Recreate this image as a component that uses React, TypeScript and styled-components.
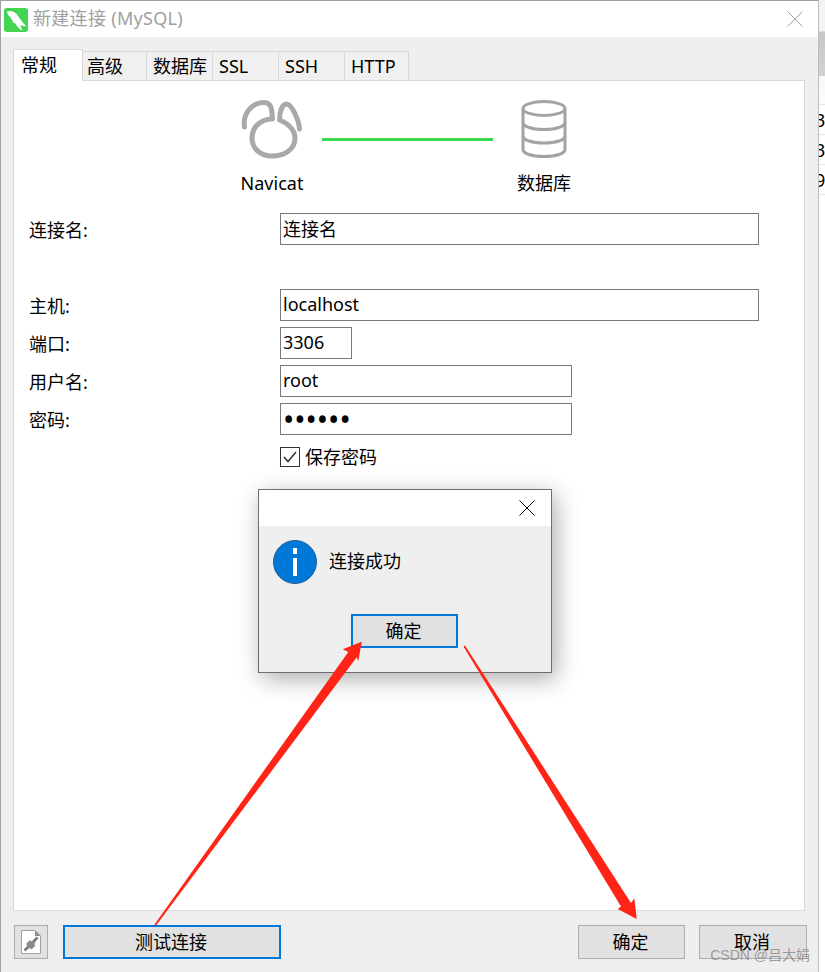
import React from 'react';
import styled, { createGlobalStyle } from 'styled-components';

const GlobalStyle = createGlobalStyle`
  html, body {
    margin: 0;
    padding: 0;
    background: #fff;
  }
  * {
    box-sizing: border-box;
  }
`;

const Page = styled.div`
  position: relative;
  width: 825px;
  height: 972px;
  display: flex;
  overflow: hidden;
  font-family: 'Noto Sans', 'Noto Sans CJK SC', sans-serif;
  font-size: 18px;
  color: #000;
`;

const Win = styled.div`
  width: 819px;
  height: 972px;
  flex: none;
  display: flex;
  flex-direction: column;
  border: 1px solid #a0a0a0;
  border-bottom: none;
  border-right-color: #bdbdbd;
`;

const TitleBar = styled.div`
  height: 36px;
  flex: none;
  display: flex;
  align-items: center;
  gap: 5px;
  padding: 0 15px 0 3px;
  background: #fff;
  color: #a0a0a0;
`;

const TitleText = styled.div`
  flex: 1;
  line-height: 24px;
  letter-spacing: 0.3px;
  padding-bottom: 2px;
`;

const Body = styled.div`
  flex: 1;
  display: flex;
  flex-direction: column;
  padding: 12px 13px 0 12px;
  background: #efefef;
`;

const TabRow = styled.div`
  height: 32px;
  flex: none;
  display: flex;
  align-items: flex-end;
  position: relative;
  z-index: 1;
  margin-bottom: -1px;
`;

const Tab = styled.div<{ $width: number; $pad: number; $active?: boolean }>`
  width: ${p => p.$width}px;
  height: ${p => (p.$active ? 32 : 30)}px;
  flex: none;
  margin-right: -1px;
  padding: ${p => (p.$active ? 2 : 1)}px 0 0 ${p => p.$pad}px;
  line-height: 26px;
  white-space: nowrap;
  background: ${p => (p.$active ? '#fff' : '#f0f0f0')};
  border: 1px solid #d9d9d9;
  border-bottom: ${p => (p.$active ? 'none' : '1px solid #d9d9d9')};
  position: relative;
  z-index: ${p => (p.$active ? 1 : 0)};
`;

const Panel = styled.div`
  height: 831px;
  flex: none;
  background: #fff;
  border: 1px solid #d9d9d9;
  padding: 19px 0 0 15px;
`;

const LogoRow = styled.div`
  display: flex;
  align-items: flex-start;
  padding-left: 203px;
`;

const LogoCol = styled.div`
  width: 80px;
  flex: none;
  display: flex;
  flex-direction: column;
  align-items: center;
`;

const LogoBox = styled.div`
  height: 58px;
`;

const LogoLabel = styled.div`
  margin-top: 13px;
  line-height: 24px;
  white-space: nowrap;
`;

const Link = styled.div`
  width: 171px;
  height: 3px;
  flex: none;
  margin: 38px 11px 0 10px;
  background: #3ed64c;
`;

const Form = styled.div`
  margin-top: 18px;
  display: flex;
  flex-direction: column;
  gap: 6px;
`;

const Row = styled.div<{ $gap?: number }>`
  display: flex;
  align-items: center;
  height: 32px;
  margin-top: ${p => p.$gap || 0}px;
`;

const Label = styled.div`
  width: 251px;
  flex: none;
  line-height: 24px;
  padding-top: 1px;
`;

const Field = styled.input<{ $width: number; $dots?: boolean }>`
  width: ${p => p.$width}px;
  height: 32px;
  flex: none;
  padding: ${p => (p.$dots ? '1px 2px 0' : '0 2px 3px')};
  border: 1px solid #7a7a7a;
  border-radius: 0;
  outline: none;
  background: #fff;
  font: inherit;
  font-size: ${p => (p.$dots ? 30 : 18)}px;
  color: #000;
`;

const CheckRow = styled.div`
  display: flex;
  align-items: center;
  gap: 5px;
  height: 20px;
  margin: 12px 0 0 251px;
  line-height: 24px;
`;

const CheckBox = styled.div`
  width: 20px;
  height: 20px;
  flex: none;
  display: flex;
  align-items: center;
  justify-content: center;
  border: 1px solid #333;
  background: #fff;
`;

const Footer = styled.div`
  flex: 1;
  display: flex;
  align-items: flex-start;
  padding: 14px 0 0 1px;
`;

const PlugButton = styled.div`
  width: 34px;
  height: 34px;
  flex: none;
  display: flex;
  align-items: center;
  justify-content: center;
  margin-right: 15px;
  background: #e1e1e1;
  border: 1px solid #adadad;
`;

const Btn = styled.div<{ $width: number; $focus?: boolean }>`
  width: ${p => p.$width}px;
  height: 34px;
  flex: none;
  display: flex;
  align-items: center;
  justify-content: center;
  padding: 0 2px 2px 0;
  background: #e1e1e1;
  border: ${p => (p.$focus ? '2px solid #0078d7' : '1px solid #adadad')};
`;

const FooterRight = styled.div`
  margin-left: auto;
  margin-right: -2px;
  display: flex;
  gap: 14px;
`;

const Backdrop = styled.div`
  flex: 1;
  display: flex;
  flex-direction: column;
  background: #fff;
  overflow: hidden;
`;

const BackdropTop = styled.div`
  height: 32px;
  flex: none;
  background: #f3f3f3;
  border-bottom: 1px solid #dcdcdc;
`;

const BackdropShade = styled.div`
  height: 73px;
  flex: none;
  background: linear-gradient(#c6c6c6, #d2d2d2 61%, #f8f8f8 61%, #fbfbfb);
  border-bottom: 1px solid #e4e4e4;
`;

const BackdropCell = styled.div`
  height: 30px;
  flex: none;
  margin-left: -4px;
  line-height: 31px;
  white-space: nowrap;
  border-bottom: 1px solid #e4e4e4;
`;

const Dialog = styled.div`
  position: absolute;
  left: 258px;
  top: 489px;
  width: 294px;
  height: 184px;
  display: flex;
  flex-direction: column;
  border: 1px solid #6e6e6e;
  background: #efefef;
  box-shadow: 4px 6px 22px rgba(0, 0, 0, 0.32);
`;

const DialogTitle = styled.div`
  height: 36px;
  flex: none;
  display: flex;
  justify-content: flex-end;
  align-items: center;
  padding-right: 16px;
  background: #fff;
`;

const DialogBody = styled.div`
  display: flex;
  align-items: center;
  gap: 12px;
  margin-top: 14px;
  padding-left: 14px;
  line-height: 24px;
`;

const DialogText = styled.div`
  padding-bottom: 2px;
`;

const DialogActions = styled.div`
  display: flex;
  margin-top: 30px;
  padding-left: 92px;
`;

const Overlay = styled.svg`
  position: absolute;
  left: 0;
  top: 0;
  pointer-events: none;
`;

const Watermark = styled.div`
  position: absolute;
  right: 15px;
  top: 945px;
  line-height: 20px;
  font-family: 'Liberation Sans', 'Noto Sans CJK SC', sans-serif;
  font-size: 14px;
  white-space: nowrap;
  color: rgba(130, 130, 130, 0.75);
`;

const CloseIcon: React.FC<{ color: string }> = ({ color }) => (
  <svg width="16" height="16" viewBox="0 0 16 16" style={{ display: 'block' }}>
    <path d="M0.5 0.5 L15.5 15.5 M15.5 0.5 L0.5 15.5" stroke={color} strokeWidth="1" fill="none" />
  </svg>
);

const MysqlLogo = () => (
  <svg width="24" height="24" viewBox="0 0 24 24" style={{ flex: 'none', display: 'block', marginTop: 1 }}>
    <rect width="24" height="24" rx="3" fill="#41d552" />
    <path
      d="M2.500 4 C6 2 10 3 13 6.500 C15 9 17.500 13.500 22 18 C20 18.500 18.500 18 16.500 17 C17 19 17.500 20.500 18.500 22.500 C15.500 21.500 13 18.500 11.500 15.500 C10 15.500 9 14 8.500 13 C7.500 10.500 6 8.500 4.500 7.500 C4 6 3.500 5 2.500 4 Z"
      fill="#fff"
    />
  </svg>
);

const NavicatLogo = () => (
  <svg width="62" height="60" viewBox="0 0 62 60" style={{ display: 'block' }}>
    <path
      d="M3.500 27 C1.500 16 9 2.500 23.500 2.500 C30.500 2.500 31 10 31.500 19 C20.500 19 11 26 11 38 C11 50 21 56 31 56 C43 56 54 50 54 38 C54 30 47 23 38.500 20 C38.500 12 41 4 45.500 4 C51 4 58 21 58.500 29"
      fill="none"
      stroke="#a9a9a9"
      strokeWidth="5"
      strokeLinecap="round"
      strokeLinejoin="round"
    />
  </svg>
);

const DatabaseLogo = () => (
  <svg width="46" height="58" viewBox="0 0 46 58" style={{ display: 'block' }}>
    <g fill="none" stroke="#a3a3a3" strokeWidth="3">
      <ellipse cx="23" cy="8.500" rx="21" ry="7" />
      <path d="M2 8.500 V49.500 C2 53.500 11 56.500 23 56.500 C35 56.500 44 53.500 44 49.500 V8.500" />
      <path d="M2 22.500 C2 26.500 11 29.500 23 29.500 C35 29.500 44 26.500 44 22.500" />
      <path d="M2 36 C2 40 11 43 23 43 C35 43 44 40 44 36" />
    </g>
  </svg>
);

const PlugIcon = () => (
  <svg width="20" height="24" viewBox="0 0 20 24" style={{ display: 'block' }}>
    <path d="M0.500 0.500 H14 L19.500 6 V23.500 H0.500 Z" fill="#fff" stroke="#a0a0a0" />
    <path d="M14 0.500 V6 H19.500 Z" fill="#8c8c8c" />
    <path d="M3.500 20.500 L7 17 M13 11 L16.500 7.500" stroke="#777" strokeWidth="2.500" />
    <path d="M5 14 L9 10 L10.500 11.500 L12.500 9.500 L15 12 L13 14 L14.500 15.500 L10.500 19.500 L9 18 L7.500 19 L5 16.500 L6.500 15.500 Z" fill="#8a8a8a" />
  </svg>
);

const InfoIcon = () => (
  <svg width="44" height="44" viewBox="0 0 44 44" style={{ flex: 'none', display: 'block' }}>
    <circle cx="22" cy="22" r="21.500" fill="#0078d7" stroke="#1c5f99" />
    <rect x="20" y="18" width="4" height="18" fill="#fff" />
    <rect x="20" y="8" width="4" height="6" fill="#fff" />
  </svg>
);

const rows = [
  { label: '主机:', value: 'localhost', width: 479, gap: 38 },
  { label: '端口:', value: '3306', width: 72 },
  { label: '用户名:', value: 'root', width: 292 },
];

const tabs = [
  { name: '高级', width: 65, pad: 4 },
  { name: '数据库', width: 67, pad: 6 },
  { name: 'SSL', width: 67, pad: 6 },
  { name: 'SSH', width: 67, pad: 6 },
  { name: 'HTTP', width: 65, pad: 6 },
];

export default function App() {
  return (
    <Page>
      <GlobalStyle />
      <Win>
        <TitleBar>
          <MysqlLogo />
          <TitleText>新建连接 (MySQL)</TitleText>
          <CloseIcon color="#a0a0a0" />
        </TitleBar>
        <Body>
          <TabRow>
            <Tab $width={70} $pad={7} $active>常规</Tab>
            {tabs.map(tab => (
              <Tab key={tab.name} $width={tab.width} $pad={tab.pad}>{tab.name}</Tab>
            ))}
          </TabRow>
          <Panel>
            <LogoRow>
              <LogoCol>
                <LogoBox><NavicatLogo /></LogoBox>
                <LogoLabel>Navicat</LogoLabel>
              </LogoCol>
              <Link />
              <LogoCol>
                <LogoBox><DatabaseLogo /></LogoBox>
                <LogoLabel>数据库</LogoLabel>
              </LogoCol>
            </LogoRow>
            <Form>
              <Row>
                <Label>连接名:</Label>
                <Field $width={479} readOnly value="连接名" />
              </Row>
              {rows.map(row => (
                <Row key={row.label} $gap={row.gap}>
                  <Label>{row.label}</Label>
                  <Field $width={row.width} readOnly value={row.value} />
                </Row>
              ))}
              <Row>
                <Label>密码:</Label>
                <Field $width={292} $dots readOnly type="password" value="123456" />
              </Row>
            </Form>
            <CheckRow>
              <CheckBox>
                <svg width="14" height="12" viewBox="0 0 14 12">
                  <path d="M1 6 L5 10.500 L13 1" fill="none" stroke="#333" strokeWidth="1.500" />
                </svg>
              </CheckBox>
              保存密码
            </CheckRow>
          </Panel>
          <Footer>
            <PlugButton><PlugIcon /></PlugButton>
            <Btn $width={218} $focus>测试连接</Btn>
            <FooterRight>
              <Btn $width={107}>确定</Btn>
              <Btn $width={108}>取消</Btn>
            </FooterRight>
          </Footer>
        </Body>
      </Win>
      <Backdrop>
        <BackdropTop />
        <BackdropShade />
        <BackdropCell>3</BackdropCell>
        <BackdropCell>3</BackdropCell>
        <BackdropCell>9</BackdropCell>
      </Backdrop>
      <Dialog>
        <DialogTitle><CloseIcon color="#000" /></DialogTitle>
        <DialogBody>
          <InfoIcon />
          <DialogText>连接成功</DialogText>
        </DialogBody>
        <DialogActions>
          <Btn $width={107} $focus>确定</Btn>
        </DialogActions>
      </Dialog>
      <Overlay width="825" height="972" viewBox="0 0 825 972">
        <path d="M154.500 924.500 L156 925.500 L356.700 657.300 L358.300 661 L361.700 641.700 L342.700 649.300 L348.300 652 Z" fill="#ff2415" />
        <path d="M463.500 646.500 L465 645.500 L631 903 L634.300 898.300 L636.700 919 L617.700 909 L621 906.500 Z" fill="#ff2415" />
      </Overlay>
      <Watermark>CSDN @吕大娟</Watermark>
    </Page>
  );
}
